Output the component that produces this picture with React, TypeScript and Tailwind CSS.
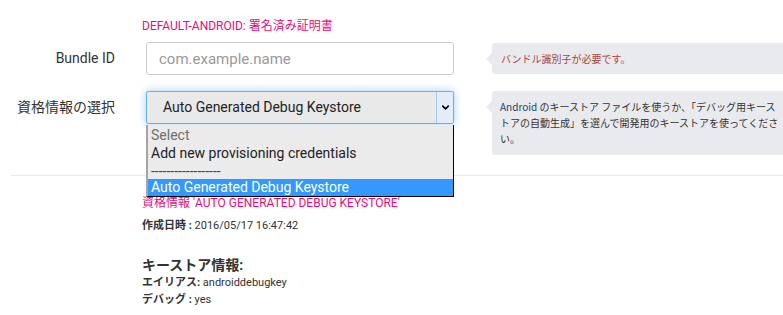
import { ChevronDown } from "lucide-react";

const font = "font-['Roboto','Noto_Sans_CJK_JP',sans-serif]";
const cjk = "font-['Noto_Sans_CJK_JP','Roboto',sans-serif]";

const Hint = ({ children, className = "" }: { children: React.ReactNode; className?: string }) => (
  <div className={`relative ml-[38px] w-[300px] shrink-0 rounded-l-[3px] bg-[#e9eaed] ${className}`}>
    <span className="absolute left-[-6px] top-[10px] h-0 w-0 border-y-[6px] border-r-[6px] border-y-transparent border-r-[#e9eaed]" />
    {children}
  </div>
);

const App = () => {
  return (
    <div className={`relative h-[315px] w-[783px] overflow-hidden bg-white text-[#333] ${font}`}>
      <p className="pl-[142px] pt-[18px] text-[12px] leading-[16px] text-[#ec0c77]">
        DEFAULT-ANDROID: 署名済み証明書
      </p>

      <div className="mt-[8px] flex h-[33px] items-center">
        <label className="w-[115px] shrink-0 text-right text-[14px]">Bundle ID</label>
        <input
          className="ml-[31px] h-[33px] w-[308px] shrink-0 rounded-[3px] border border-[#ccc] bg-white pl-[12px] text-[15px] placeholder:text-[#999] outline-none"
          placeholder="com.example.name"
        />
        <Hint className="h-[31px]">
          <p className={`pl-[9px] pt-[8px] text-[10px] leading-[16px] text-[#a94442] ${cjk}`}>
            バンドル識別子が必要です。
          </p>
        </Hint>
      </div>

      <div className="mt-[16px] flex items-start">
        <label className="flex h-[33px] w-[115px] shrink-0 items-center justify-end text-[14px]">
          資格情報の選択
        </label>
        <div className="relative ml-[31px] h-[33px] w-[308px] shrink-0">
          <div className="flex h-full items-stretch rounded-[2px] border border-[#66afe9] bg-[#e9e9ea] shadow-[0_0_8px_rgba(102,175,233,0.6)]">
            <span className="flex flex-1 items-center pl-[16px] text-[14px] text-[#222]">
              Auto Generated Debug Keystore
            </span>
            <span className="flex w-[17px] items-center justify-center border-l border-[#a9c7ea] bg-[#e3edf9]">
              <ChevronDown className="size-[11px] text-black" strokeWidth={3.5} />
            </span>
          </div>
          <ul className="absolute left-0 top-[34px] z-10 w-[308px] border-b border-l-2 border-r border-b-black border-l-[#a6a6a6] border-r-black bg-[#ebebeb] text-[14px] leading-[18px]">
            <li className="h-[18px] pl-[3px] pt-px text-[#6f6f6f]">Select</li>
            <li className="h-[18px] pl-[3px] pt-px text-[#222]">Add new provisioning credentials</li>
            <li className="h-[18px] pl-[3px] pt-px text-[#444]">------------------</li>
            <li className="h-[17px] bg-[#3399ff] pl-[3px] text-white leading-[17px]">Auto Generated Debug Keystore</li>
          </ul>
        </div>
        <Hint className="h-[64px]">
          <div className={`px-[8px] pt-[8px] text-[10px] leading-[16px] ${cjk}`}>
            <p>
              <span className="text-[#24406a]">Android</span> のキーストア ファイルを使うか、「デバッグ用キース
            </p>
            <p>トアの自動生成」を選んで開発用のキーストアを使ってくださ</p>
            <p>い。</p>
          </div>
        </Hint>
      </div>

      <div className="ml-[11px] mt-[20px] h-px bg-[#e8e8e8]" />

      <p className="pl-[142px] pt-[19px] text-[12px] leading-[16px] text-[#ec0c77]">
        資格情報 'AUTO GENERATED DEBUG KEYSTORE'
      </p>
      <p className="mt-[7px] pl-[142px] text-[11px] leading-[16px]">
        <span className="font-bold">作成日時 :</span> 2016/05/17 16:47:42
      </p>
      <p className="mt-[22px] pl-[142px] text-[14px] font-bold leading-[18px]">キーストア情報:</p>
      <p className="pl-[142px] text-[11px] leading-[17px]">
        <span className="font-bold">エイリアス:</span> androiddebugkey
      </p>
      <p className="pl-[142px] text-[11px] leading-[17px]">
        <span className="font-bold">デバッグ :</span> yes
      </p>
    </div>
  );
};

export default App;
